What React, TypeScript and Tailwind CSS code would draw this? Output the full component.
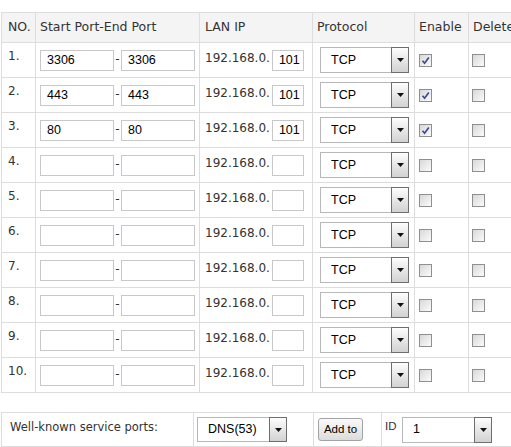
import React from "react";

type Row = { start: string; end: string; ip: string; enabled: boolean };

const ROWS: Row[] = [
  { start: "3306", end: "3306", ip: "101", enabled: true },
  { start: "443", end: "443", ip: "101", enabled: true },
  { start: "80", end: "80", ip: "101", enabled: true },
  ...Array.from({ length: 7 }, () => ({ start: "", end: "", ip: "", enabled: false })),
];

const ui = { fontFamily: '"DejaVu Sans", Verdana, sans-serif' };
const field = { fontFamily: '"Liberation Sans", Arial, sans-serif' };

function Arrow() {
  return (
    <span className="-my-px -mr-px flex w-[18px] items-center justify-center border border-[#6e6e6e] bg-linear-to-b from-[#fdfdfd] to-[#d2d2d2]">
      <svg width="7" height="4" viewBox="0 0 7 4">
        <path d="M0 0h7L3.5 4z" fill="#111" />
      </svg>
    </span>
  );
}

function Select({ value, w, h = 26 }: { value: string; w: string; h?: number }) {
  return (
    <div
      className={`flex ${w} ${h === 26 ? "h-[26px]" : "h-[25px]"} items-stretch border border-[#b8b8b8] bg-white text-[12.5px] text-black`}
      style={field}
    >
      <span className="flex flex-1 items-center pl-[10px]">{value}</span>
      <Arrow />
    </div>
  );
}

function Check({ on }: { on: boolean }) {
  return (
    <span className="flex h-[13px] w-[13px] items-center justify-center border border-[#8f8f8f] bg-linear-to-br from-[#d8d8d8] to-[#fbfbfb]">
      {on && (
        <svg width="9" height="9" viewBox="0 0 9 9">
          <path d="M1.5 4.8 3.6 7.2 7.8 1.6" fill="none" stroke="#3a4b94" strokeWidth="1.7" />
        </svg>
      )}
    </span>
  );
}

function Box({ value, w }: { value: string; w: string }) {
  return (
    <input
      readOnly
      value={value}
      className={`${w} h-[21px] border border-[#c8c8c8] bg-white pl-[6px] text-[12.5px] text-black outline-none`}
      style={field}
    />
  );
}

export default function App() {
  const td = "border border-[#dddddd] p-0 align-middle";
  return (
    <div className="h-[447px] w-[511px] overflow-hidden bg-white text-[#333]" style={ui}>
      <table className="ml-px mt-[12px] w-[524px] table-fixed border-collapse">
        <colgroup>
          <col className="w-[34px]" />
          <col className="w-[164px]" />
          <col className="w-[113px]" />
          <col className="w-[102px]" />
          <col className="w-[54px]" />
          <col className="w-[57px]" />
        </colgroup>
        <thead>
          <tr className="h-[30px] bg-[#f4f4f4] text-left text-[12.5px]">
            <th className={`${td} pl-[6px] font-normal`}>NO.</th>
            <th className={`${td} pl-[4px] font-normal`}>Start Port-End Port</th>
            <th className={`${td} pl-[5px] font-normal`}>LAN IP</th>
            <th className={`${td} pl-[4px] font-normal`}>Protocol</th>
            <th className={`${td} pl-[4px] font-normal`}>Enable</th>
            <th className={`${td} pl-[4px] font-normal whitespace-nowrap`}>Delete</th>
          </tr>
        </thead>
        <tbody className="text-[12px]">
          {ROWS.map((r, i) => (
            <tr key={i} className="h-[35px]">
              <td className={`${td} pb-[9px] pl-[6px]`}>{i + 1}.</td>
              <td className={`${td} pl-[4px]`}>
                <div className="flex items-center">
                  <Box value={r.start} w="w-[74px]" />
                  <span className="mb-[3px] w-[7px] text-center">-</span>
                  <Box value={r.end} w="w-[74px]" />
                </div>
              </td>
              <td className={`${td} pl-[5px]`}>
                <div className="flex items-center">
                  <span className="mb-[5px]">192.168.0.</span>
                  <Box value={r.ip} w="ml-[2px] w-[32px]" />
                </div>
              </td>
              <td className={`${td} pl-[7px]`}>
                <Select value="TCP" w="w-[89px]" />
              </td>
              <td className={`${td} pl-[4px]`}>
                <Check on={r.enabled} />
              </td>
              <td className={`${td} pl-[3px]`}>
                <Check on={false} />
              </td>
            </tr>
          ))}
        </tbody>
      </table>

      <table className="ml-px mt-[19px] w-[524px] table-fixed border-collapse text-[11.5px]">
        <colgroup>
          <col className="w-[192px]" />
          <col className="w-[120px]" />
          <col className="w-[68px]" />
          <col />
        </colgroup>
        <tbody>
          <tr className="h-[34px]">
            <td className={`${td} pb-[4px] pl-[8px]`}>Well-known service ports:</td>
            <td className={`${td} pl-[3px]`}>
              <Select value="DNS(53)" w="w-[90px]" h={25} />
            </td>
            <td className={`${td} pl-[4px]`}>
              <button
                className="h-[23px] w-[45px] rounded-[3px] border border-[#a3a3a3] bg-linear-to-b from-[#fafafa] to-[#dcdcdc] text-[11.5px] text-black"
                style={field}
              >
                Add to
              </button>
            </td>
            <td className={`${td} pl-[3px]`}>
              <div className="flex items-center">
                <span className="mb-[6px] w-[17px]" style={field}>
                  ID
                </span>
                <Select value="1" w="w-[90px]" />
              </div>
            </td>
          </tr>
        </tbody>
      </table>
    </div>
  );
}
